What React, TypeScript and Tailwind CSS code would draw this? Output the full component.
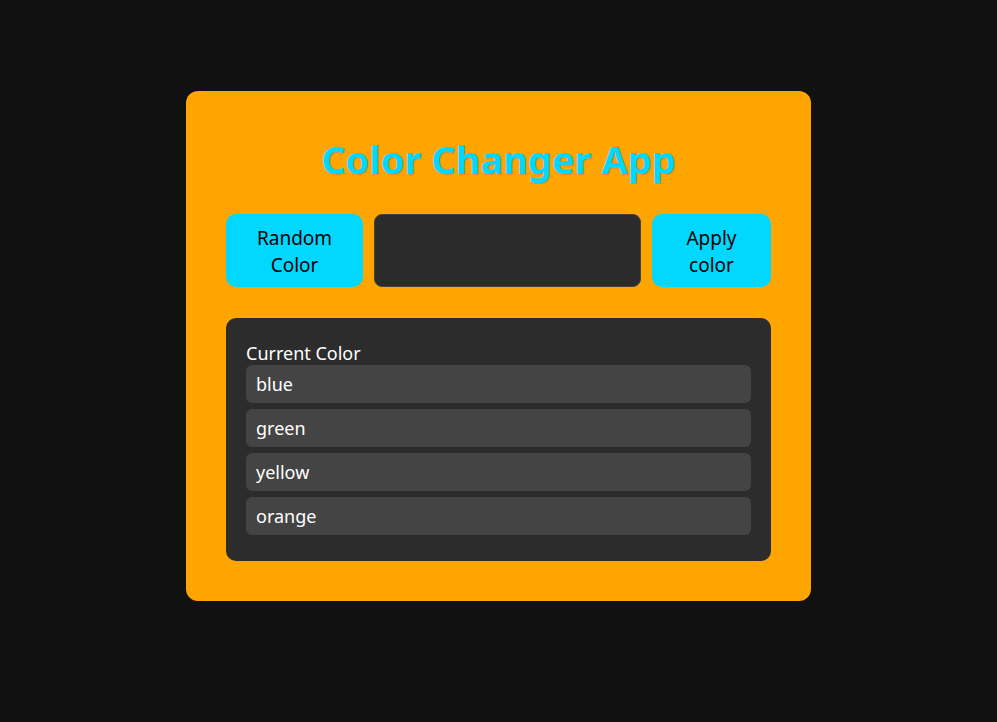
export default function App() {
  const colors = ["blue", "green", "yellow", "orange"];

  return (
    <div className="min-h-screen w-full bg-[#111111] pt-[91px] font-['Noto_Sans',sans-serif]">
      <div className="mx-auto flex w-[625px] flex-col rounded-xl bg-[#ffa500] px-10 pt-10 pb-10">
        {/* Title */}
        <h1 className="flex h-[60px] items-center justify-center pb-[3px] text-[38px] font-bold text-[#00d8ff] [text-shadow:1px_1px_1px_rgba(180,80,140,0.35)]">
          Color Changer App
        </h1>

        {/* Controls */}
        <div className="mt-[23px] flex h-[73px] gap-[11px]">
          <button className="w-[137px] rounded-[10px] bg-[#00d8ff] pt-[3px] text-[19px] leading-[27px] text-black">
            Random
            <br />
            Color
          </button>
          <input
            type="text"
            className="w-[267px] rounded-lg border border-[#444] bg-[#2b2b2b] px-3 text-[18px] text-white outline-none"
          />
          <button className="w-[119px] rounded-[10px] bg-[#00d8ff] pt-[3px] text-[19px] leading-[27px] text-black">
            Apply
            <br />
            color
          </button>
        </div>

        {/* Current color list */}
        <div className="mt-[31px] flex h-[243px] flex-col rounded-[10px] bg-[#2c2c2c] px-5 pt-[23px]">
          <p className="text-[18px] leading-[24px] text-white">Current Color</p>
          <ul className="flex flex-col gap-[6px]">
            {colors.map((c) => (
              <li
                key={c}
                className="flex h-[38px] items-center rounded-md bg-[#444444] px-[10px] text-[18px] text-white"
              >
                {c}
              </li>
            ))}
          </ul>
        </div>
      </div>
    </div>
  );
}
